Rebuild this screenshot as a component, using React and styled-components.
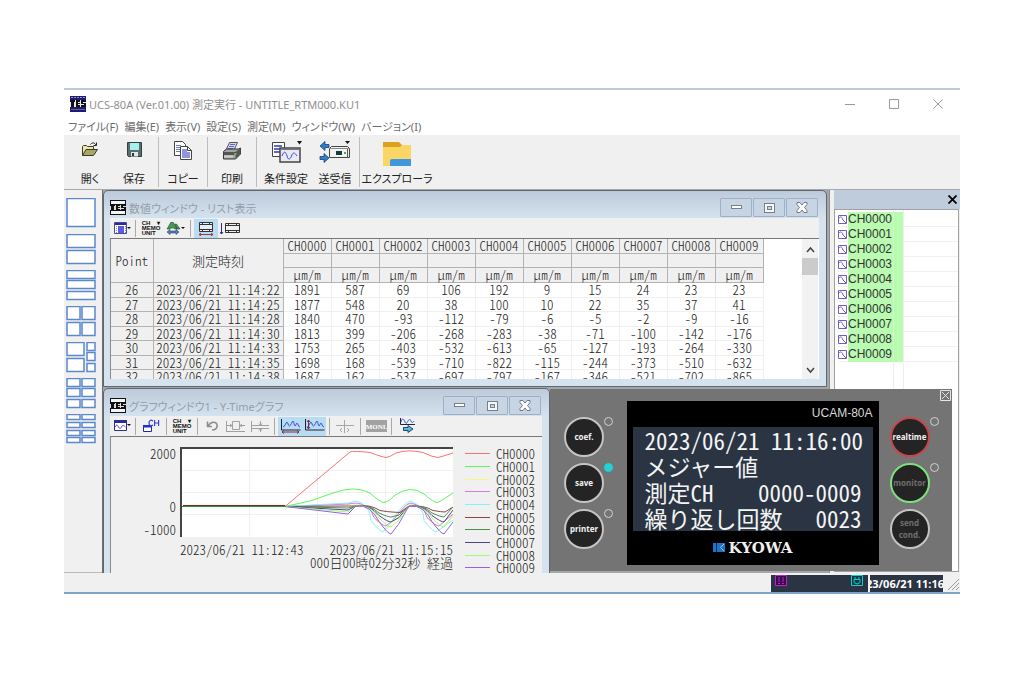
import React, { useState } from "react";
import styled, { createGlobalStyle } from "styled-components";

const UI_FONT = `"Noto Sans", "Noto Sans CJK JP", sans-serif`;
const GRID_FONT = `"Noto Sans CJK JP", monospace`;
const LIST_FONT = `"Liberation Sans", sans-serif`;

// ---------------------------------------------------------------- data

const menus = [
    "ファイル(F)",
    "編集(E)",
    "表示(V)",
    "設定(S)",
    "測定(M)",
    "ウィンドウ(W)",
    "バージョン(I)",
];

const channels = Array.from({ length: 10 }, (_, i) => `CH000${i}`);

const points = [
    [26, "22", [1891, 587, 69, 106, 192, 9, 15, 24, 23, 23]],
    [27, "25", [1877, 548, 20, 38, 100, 10, 22, 35, 37, 41]],
    [28, "28", [1840, 470, -93, -112, -79, -6, -5, -2, -9, -16]],
    [29, "30", [1813, 399, -206, -268, -283, -38, -71, -100, -142, -176]],
    [30, "33", [1753, 265, -403, -532, -613, -65, -127, -193, -264, -330]],
    [31, "35", [1698, 168, -539, -710, -822, -115, -244, -373, -510, -632]],
    [32, "38", [1687, 162, -537, -697, -797, -167, -346, -521, -702, -865]],
];

const colors = [
    "#f77474",
    "#5cf55c",
    "#f7f780",
    "#dd74e8",
    "#80f4fa",
    "#8f4444",
    "#4a8f4a",
    "#4c4484",
    "#a2fa74",
    "#9560f0",
];

// small channels: [ramp end, crest, first dip x, dip y]
const dips = [
    [57, 57, 207, 82],
    [57, 56, 206, 79],
    [56, 54, 203, 85],
    [59, 59, 212, 65],
    [61, 59, 211, 70],
    [63, 59, 211, 75],
    [65, 59, 211, 80],
    [67, 59, 211, 87],
];

// [x, y, w, h] panes of every layout preset
const grid = (cols, rows) => {
    const w = cols === 1 ? 29 : 14;
    const h = Math.floor(31 / rows) - 1;
    const out = [];
    for (let r = 0; r < rows; r++)
        for (let c = 0; c < cols; c++)
            out.push([c * 15, Math.round((r * 31) / rows), w, h]);
    return out;
};

const layouts = [
    ["1", [[0, 0, 29, 29]]],
    ["2", grid(1, 2)],
    ["3", grid(1, 3)],
    ["4", grid(2, 2)],
    [
        "5",
        [
            [0, 0, 18, 14],
            [0, 16, 18, 14],
            [20, 0, 9, 9],
            [20, 10, 9, 9],
            [20, 21, 9, 9],
        ],
    ],
    ["6", grid(2, 3)],
    ["8", grid(2, 4)],
];

// ---------------------------------------------------------------- styles

const GlobalStyle = createGlobalStyle`
    * {
        box-sizing: border-box;
    }
    body {
        margin: 0;
        background: #fff;
        font-family: ${UI_FONT};
        font-size: 11px;
        font-feature-settings: "palt";
    }
    button {
        padding: 0;
        border: 0;
        background: none;
        font: inherit;
        color: inherit;
        font-feature-settings: inherit;
    }
    svg {
        display: block;
    }
`;

const Page = styled.main`
    padding: 88px 64px;
`;

const AppWindow = styled.div`
    border-top: 2px solid #b9cbdc;
    border-bottom: 2px solid #7ba5cb;
    background: #f0f0f0;
`;

const TitleBar = styled.header`
    display: flex;
    align-items: center;
    height: 27px;
    padding-left: 6px;
    background: #fff;
`;

const AppTitle = styled.h1`
    flex: 1;
    margin: 0 0 0 3px;
    font-size: 11px;
    font-weight: 400;
    color: #8f8f8f;
`;

const CaptionButton = styled.button`
    display: grid;
    place-items: center;
    width: 44px;
    height: 26px;
    color: #9a9a9a;
`;

const MenuBar = styled.nav`
    display: flex;
    gap: 6px;
    height: 18px;
    padding-left: 4px;
    background: #fff;
    color: #6c6c6c;
    line-height: 19px;
    white-space: nowrap;
`;

const ToolBar = styled.div`
    display: flex;
    height: 55px;
    padding: 2px 0 2px 4px;
    border-bottom: 1px solid #a8a8a8;
    color: #222;
`;

const ToolButton = styled.button`
    display: flex;
    flex-direction: column;
    align-items: center;
    justify-content: space-between;
    width: ${(p) => p.$width || 44}px;
    padding-top: 4px;
    line-height: 17px;
    white-space: nowrap;
`;

const ToolDivider = styled.span`
    width: 1px;
    margin: 0 2px;
    background: #bdbdbd;
`;

const Workspace = styled.div`
    position: relative;
    display: flex;
    height: 383px;
`;

const LayoutBar = styled.aside`
    display: flex;
    flex-direction: column;
    gap: 5px;
    width: 38px;
    padding: 8px 0 0 2px;
    border-bottom: 1px solid #b8b8b8;
`;

const Desktop = styled.div`
    display: flex;
    flex: 1;
    flex-direction: column;
    gap: 1px;
    min-width: 0;
    padding: 0 2px 0 0;
    border-left: 1px solid #6d6d6d;
    background: #a3a7aa;
    overflow: hidden;
`;

const SubWindow = styled.section`
    display: flex;
    flex-direction: column;
    flex-shrink: 0;
    width: ${(p) => p.$width || "100%"};
    height: 197px;
    padding: 0 7px 7px 6px;
    border: 1px solid #5f6770;
    border-radius: 5px 5px 0 0;
    background: linear-gradient(#bccadb, #d6e3ef 28px, #d6e3ef);
`;

const SubTitleBar = styled.header`
    display: flex;
    align-items: center;
    gap: 1px;
    flex-shrink: 0;
    height: 27px;
    padding: 6px 1px 0 0;
`;

const SubTitle = styled.h2`
    flex: 1;
    margin: 0 0 0 2px;
    font-size: 11px;
    font-weight: 400;
    color: #949ea8;
`;

const SubCaptionButton = styled.button`
    display: grid;
    place-items: center;
    width: 32px;
    height: 19px;
    border: 1px solid #9fb0c4;
    border-radius: 1px;
    background: #c6d4e4;
`;

const SubToolBar = styled.div`
    display: flex;
    align-items: center;
    flex-shrink: 0;
    height: 21px;
    padding-left: 2px;
    background: #f0f0f0;
    border-bottom: 1px solid #777;
`;

const IconButton = styled.button`
    display: grid;
    place-items: center;
    width: ${(p) => p.$width || 24}px;
    height: 19px;
    background: ${(p) => (p.$active ? "#b9dcf5" : "none")};
`;

const MemoButton = styled(IconButton)`
    font: 700 6px/5px "Liberation Sans", sans-serif;
    color: #111;
    text-align: left;
    white-space: pre;
`;

const IconDivider = styled.span`
    width: 1px;
    height: 17px;
    margin: 0 3px;
    background: #a9a9a9;
`;

const ListBody = styled.div`
    display: flex;
    flex: 1;
    min-height: 0;
    background: #fff;
`;

const TableView = styled.div`
    flex: 1;
    overflow: hidden;
    border-left: 1px solid #8a8a8a;
`;

const DataTable = styled.table`
    table-layout: fixed;
    width: 652px;
    border-collapse: collapse;
    font: 300 13px/14px ${GRID_FONT};
    font-feature-settings: "hwid";
    color: #222;
    text-align: center;
`;

const HeadCell = styled.th`
    height: ${(p) => (p.$tall ? 43 : 14)}px;
    padding: 0;
    border: 1px solid #b3b3b3;
    border-top: 0;
    border-left: 0;
    background: #f0f0f0;
    font-weight: 300;
    line-height: 13px;
`;

const Row = styled.tr`
    height: 15px;

    &:nth-child(even) {
        height: 14px;
    }
`;

const IndexCell = styled.th`
    padding: 0;
    border: 1px solid #b3b3b3;
    border-left: 0;
    background: #f0f0f0;
    font-weight: 300;
    line-height: 13px;
    white-space: nowrap;
`;

const ValueCell = styled.td`
    padding: 0;
    border: 1px solid #f0f0f0;
    line-height: 13px;
`;

const ScrollBar = styled.div`
    display: flex;
    flex-direction: column;
    align-items: center;
    gap: 4px;
    width: 16px;
    margin-right: 1px;
    padding: 7px 0 5px;
    background: #f2f2f2;
`;

const ScrollThumb = styled.span`
    width: 16px;
    height: 17px;
    margin-bottom: auto;
    background: #cbcbcb;
`;

const GraphBody = styled.div`
    display: flex;
    flex: 1;
    gap: 12px;
    padding: 10px 0 0 26px;
    border-left: 1px solid #8a8a8a;
    background: #f0f0f0;
    font: 300 13px/13px ${GRID_FONT};
    font-feature-settings: "hwid";
    color: #222;
    white-space: nowrap;
`;

const Plot = styled.div`
    display: grid;
    grid-template-columns: 39px 273px;
    align-content: start;
    column-gap: 4px;
`;

const Scale = styled.div`
    display: grid;
    grid-template-rows: 53px 23px 13px;
    text-align: right;
`;

const TimeRange = styled.div`
    grid-column: 2;
    display: flex;
    justify-content: space-between;
    padding-top: 6px;
`;

const Elapsed = styled.div`
    grid-column: 1 / 3;
    text-align: right;
`;

const Legend = styled.ul`
    margin: 0;
    padding: 0;
    list-style: none;
`;

const LegendItem = styled.li`
    display: flex;
    align-items: flex-start;
    gap: 6px;
    height: 13px;

    &:nth-child(3n) {
        height: 12px;
    }

    &::before {
        content: "";
        width: 25px;
        height: 1px;
        margin-top: 6px;
        background: ${(p) => p.$color};
    }
`;

const Dock = styled.aside`
    display: flex;
    flex-direction: column;
    width: 131px;
    padding-left: 4px;
    border-left: 1px solid #8f8f8f;
`;

const DockHeader = styled.div`
    display: flex;
    justify-content: flex-end;
    align-items: center;
    height: 19px;
    padding-right: 3px;
    background: #bfccdb;
`;

const ChannelList = styled.ul`
    flex: 1;
    margin: 0 1px 1px 0;
    padding: 2px 0 0 3px;
    border: 1px solid #a0a0a0;
    background: linear-gradient(#eee, #eee) 58px 0 / 1px 100% no-repeat,
        linear-gradient(#eee, #eee) 68px 0 / 1px 100% no-repeat, #fff;
    list-style: none;
    font: 12px/15px ${LIST_FONT};
    color: #333;
`;

const Channel = styled.li`
    display: flex;
    align-items: center;
    height: 15px;
    border-bottom: 1px solid #f0f0f0;
`;

const ChannelName = styled.span`
    width: 55px;
    height: 15px;
    margin-left: 1px;
    background: linear-gradient(90deg, #b9fbb0 45px, #cdfcc6 45px, #cdfcc6 46px, #b9fbb0 46px);
`;

const Instrument = styled.section`
    position: absolute;
    right: 8px;
    bottom: 2px;
    display: flex;
    gap: 11px;
    width: 402px;
    height: 182px;
    padding: 12px 11px 0 14px;
    background: #747474;
`;

const InstrumentClose = styled.button`
    position: absolute;
    top: 1px;
    right: 1px;
`;

const KeyColumn = styled.div`
    display: flex;
    flex: 1;
    flex-direction: column;
    gap: 6px;
    padding-top: 16px;
`;

const KeySlot = styled.div`
    display: flex;
    align-items: flex-start;
    height: 40px;
`;

const Key = styled.button`
    flex-shrink: 0;
    width: 40px;
    height: 40px;
    border: 2px solid ${(p) => p.$ring || "#c4c4c4"};
    border-radius: 50%;
    background: #242424;
    font: 700 8px/12px ${UI_FONT};
    color: ${(p) => (p.$off ? "#6f6f6f" : "#f2f2f2")};
`;

const Lamp = styled.span`
    width: 9px;
    height: 9px;
    border: 1px solid ${(p) => (p.$on ? "#1fd3d6" : "#d2d2d2")};
    border-radius: 50%;
    background: ${(p) => (p.$on ? "#1fd3d6" : "none")};
`;

const Display = styled.div`
    flex-shrink: 0;
    width: 252px;
    height: 164px;
    padding: 5px 6px 0;
    background: #000;
    color: #fff;
`;

const Model = styled.div`
    color: #d8d8d8;
    font: 12px/14px ${LIST_FONT};
    text-align: right;
`;

const Lcd = styled.div`
    height: 104px;
    margin-top: 7px;
    padding: 0 0 0 12px;
    background: #2a3443;
    font: 23px/26px ${GRID_FONT};
    font-feature-settings: "hwid";
    color: #f4f4f4;
    white-space: pre;
`;

const LcdLine = styled.div`
    display: flex;
    justify-content: space-between;
    width: 217px;
    height: 26px;
`;

const Brand = styled.div`
    display: flex;
    align-items: center;
    justify-content: center;
    gap: 4px;
    height: 33px;
    font: 700 15px/16px "DejaVu Serif", serif;
    color: #f0f0f0;
`;

const StatusBar = styled.footer`
    display: flex;
    justify-content: flex-end;
    gap: 2px;
    height: 19px;
    padding-top: 2px;
`;

const StatusLights = styled.div`
    display: flex;
    justify-content: space-between;
    width: 97px;
    padding: 0 5px 0 4px;
    background: #2a3443;
`;

const Clock = styled.time`
    display: flex;
    justify-content: center;
    width: 73px;
    background: #2a3443;
    color: #fff;
    font: 700 11px/17px ${UI_FONT};
    white-space: nowrap;
    overflow: hidden;
`;

// ---------------------------------------------------------------- icons

const AppLogo = () => (
    <svg width="16" height="16" viewBox="0 0 16 16">
        <path fill="#1c1c78" d="M0 0h16v16H0z" />
        <path stroke="#99a" strokeDasharray="2 1" d="M1 1.500h14" />
        <path fill="#e8e8f0" d="M0 4h16v7H0z" />
        <path fill="#111" d="M0 4h5v2H4v5H1V6H0zM6 4h4v2H8v1h2v1H8v1h2v2H6zM11 4h5v2h-3v1h3v4h-5V9h3V8h-3z" />
        <path stroke="#667" d="M1 13.500h14" />
    </svg>
);

const WindowLogo = () => (
    <svg width="16" height="15" viewBox="0 0 16 15">
        <path fill="#111" d="M0 0h16v15H0z" />
        <path fill="#f4f4f4" d="M1 1h14v3H1zM1 11h14v3H1z" />
        <path fill="#ddd" d="M0 5h16v5H0z" />
        <path fill="#111" d="M0 5h5v1H4v4H1V6H0zM6 5h4v1H8v1h2v1H8v1h2v1H6zM11 5h5v1h-3v1h3v3h-5V9h3V8h-3z" />
    </svg>
);

const OpenIcon = () => (
    <svg width="18" height="18" viewBox="0 0 18 18">
        <path fill="#e9e6b0" stroke="#3d3c1c" d="M1.500 14.500V5.500l1-1h3l1 1h6v3" />
        <path fill="#a9a66a" stroke="#3d3c1c" d="M1.500 14.500 5 8.500h11.500l-4 6z" />
        <path fill="none" stroke="#222" d="M9.500 3.500c2-2.500 4-2 5.500.500M15.500 1.500v3h-3" />
    </svg>
);

const SaveIcon = () => (
    <svg width="17" height="18" viewBox="0 0 17 18">
        <path fill="#55706f" stroke="#333f3f" d="M1.500 1.500h14v14h-13l-1-1z" />
        <path fill="#a8f0f0" d="M4 2h9v7H4z" />
        <path fill="#e6e6e6" d="M5 11h7v4.500H5z" />
        <path fill="#333" d="M6 12h2v3H6z" />
    </svg>
);

const CopyIcon = () => (
    <svg width="20" height="20" viewBox="0 0 20 20">
        <path fill="#fff" stroke="#444" d="M1.500.500h8l3 3v11h-11z" />
        <path stroke="#6f78c8" d="M3 4.500h5M3 6.500h7M3 8.500h7M3 10.500h7" />
        <path fill="#fff" stroke="#444" d="M7.500 5.500h7l4 4v9h-11z" />
        <path fill="#8d94e0" d="M9 8h5v3h3v6H9z" />
        <path fill="none" stroke="#444" d="M14.500 5.500v4h4" />
    </svg>
);

const PrintIcon = () => (
    <svg width="20" height="20" viewBox="0 0 20 20">
        <path fill="#d4d6f4" stroke="#555" d="M7.500 1.500h8L12 9H4z" />
        <path stroke="#5d66c4" d="M8 3.500h5M7 5.500h5M6 7.500h5" />
        <path fill="#a4a4a4" stroke="#333" d="m1.500 10.500 3-2.500h12l2-1v6l-5 5h-12z" />
        <path fill="#555" d="M1.500 11h12v3h-12zM13.500 11l5-4v6l-5 5z" />
        <path fill="#d0d0d0" d="M2 14.500h9v2H2z" />
        <path fill="#4fc04f" d="M12 12h2.500v2H12z" />
    </svg>
);

const ConditionIcon = () => (
    <svg width="31" height="23" viewBox="0 0 31 23">
        <path fill="#fff" stroke="#444" d="M1.500 1.500h12v14h-12z" />
        <path stroke="#6069c8" strokeWidth="2" d="M3 5h8M3 8h8M3 11h8" />
        <path fill="#e9e9f6" stroke="#444" strokeWidth="1.500" d="M9 7h20v14H9z" />
        <path stroke="#777" d="M9 8.500h20" />
        <path fill="none" stroke="#4048c8" d="M11 15c2-6 4-4 5 0s3 4 4.500 0 3-4 5.500 0" />
        <path fill="#111" d="M26 0h5l-2.500 3.500z" />
    </svg>
);

const TransferIcon = () => (
    <svg width="32" height="23" viewBox="0 0 32 23">
        <path fill="#2e7fd0" stroke="#1c3f78" strokeWidth=".8" d="m1 5 5-4.500v3h4v3H6v3zM10 17l-5 4.500v-3H1v-3h4v-3z" />
        <path fill="#f2f2f2" stroke="#444" d="m10.500 7.500 2-2h16l2 2v9h-20z" />
        <path stroke="#888" d="M10.500 7.500h20" />
        <path fill="#143c3c" d="M17 10h6v4h-6z" />
        <path fill="#3fb04f" d="M25 11h2v2h-2z" />
        <path stroke="#555" d="M28.500 8v8" />
        <path fill="#111" d="M26 0h5l-2.500 3z" />
    </svg>
);

const ExplorerIcon = () => (
    <svg width="28" height="25" viewBox="0 0 28 25">
        <path fill="#dda21c" d="M0 1h16l3 3-2 4H0z" />
        <path fill="#fbd665" d="M0 6h17l2-2h9v21H0z" />
        <path fill="#3f97dc" d="M7 25v-5q0-2 2-2h19v7z" />
    </svg>
);

const ListViewIcon = () => (
    <svg width="17" height="12" viewBox="0 0 17 12">
        <path fill="#fff" stroke="#4a4a9a" d="M.5.500h12v11H.5z" />
        <path fill="#2b2ba8" d="M1 1h11v2H1z" />
        <path fill="#5c5ce0" d="M4 4h6v7H4z" />
        <path stroke="#8a8ad0" strokeDasharray="1 1" d="M2.500 4v7M11.500 4v7" />
        <path fill="#111" d="M13 5h4l-2 2z" />
    </svg>
);

const FontIcon = () => (
    <svg width="19" height="13" viewBox="0 0 19 13">
        <path fill="#3fa050" stroke="#223" strokeWidth=".5" d="M5 0h2l4 7H8.500L8 6H5L4 7H1zM9 2h1.500L14 7h-3z" />
        <path fill="#4a85d8" stroke="#223" strokeWidth=".5" d="m1 10 3-2.500V9h6V7.500l3 2.500-3 2.500V11H4v1.500z" />
        <path fill="#111" d="M15 5h4l-2 2z" />
    </svg>
);

const RowFitIcon = () => (
    <svg width="16" height="15" viewBox="0 0 16 15">
        <path fill="#e6eef4" stroke="#333" d="M1.500 1.500h13v9h-13z" />
        <path stroke="#333" d="M1 3.500h14M1 8.500h14M4.500 1v3M11.500 1v3M4.500 8v3M11.500 8v3" />
        <path fill="none" stroke="#a33" d="M1 13.500h14M3 12l-2 1.500L3 15M13 12l2 1.500-2 1.500" />
    </svg>
);

const ColumnFitIcon = () => (
    <svg width="20" height="13" viewBox="0 0 20 13">
        <path stroke="#2a2a8a" fill="none" d="M1.500 1v11M0 10l1.500 2L3 10" />
        <path fill="#f0f0f0" stroke="#333" d="M5.500 1.500h14v9h-14z" />
        <path stroke="#333" d="M5 3.500h14M5 8.500h14M8.500 1v3M16.500 1v3M8.500 8v3M16.500 8v3" />
    </svg>
);

const GraphViewIcon = () => (
    <svg width="17" height="12" viewBox="0 0 17 12">
        <path fill="#fff" stroke="#2c2c90" d="M.5.500h12v10H.5z" />
        <path fill="#2b2ba0" d="M0 0h13v3H0z" />
        <path fill="none" stroke="#3f3fd0" d="M1 7c1.500-3 2.500-2 3.500 0s2 2 3 0 2-2 4 0" />
        <path fill="#111" d="M13 4h4l-2 2z" />
    </svg>
);

const ChannelIcon = () => (
    <svg width="18" height="14" viewBox="0 0 18 14">
        <path fill="#fff" stroke="#222c9c" d="M1.500 6.500h8v6h-8z" />
        <path fill="#2230c8" d="M1 6h9v2.500H1z" />
        <path fill="none" stroke="#3540e0" strokeWidth="1.200" d="M11 2.200C9 .2 7 1.500 7 4s2 3.800 4 1.800M12.600 1v6M16.600 1v6M12.600 4h4" />
    </svg>
);

const UndoIcon = () => (
    <svg width="13" height="12" viewBox="0 0 13 12">
        <path fill="none" stroke="#8d8d8d" strokeWidth="1.600" d="M2 6c3-5 8-4.500 9-1.500C12 8 9 10 6 10M1.500 1.500V6.500H6" />
    </svg>
);

const SpreadIcon = ({ vertical }) => (
    <svg width="19" height="13" viewBox="0 0 19 13">
        {vertical ? (
            <path fill="none" stroke="#a0a0a0" d="M1.500 1v11M2 5.500h17M2 8.500h17M10.500 1v4M10.500 9v3M9 3.500l1.500 2 1.500-2M9 10.500l1.500-2 1.500 2" />
        ) : (
            <path fill="none" stroke="#a0a0a0" d="M.5 1v11M6.500 1.500h7v8h-7zM1 5.500h5M14 5.500h5M4 4l2 1.500L4 7M16 4l-2 1.500L16 7M1 11.500h18" />
        )}
    </svg>
);

const WaveIcon = ({ tall }) => (
    <svg width="21" height="16" viewBox="0 0 21 16">
        <path fill="none" stroke="#3c4fd0" d="M3 9c2 0 3-5 4-5s1 4 2.500 4S12 3 13 3s1 5 2 5 1-3 2-3 1 4 3 4" />
        <path stroke="#223" d="M1.500 1v11h19" fill="none" />
        {tall ? (
            <path fill="none" stroke="#8a2a3a" d="M4.500 2v9M3 4l1.500-2L6 4M3 9l1.500 2L6 9" />
        ) : (
            <path fill="none" stroke="#8a2a3a" d="M2 14h17M4 12.500 2 14l2 1.500M17 12.500l2 1.500-2 1.500" />
        )}
    </svg>
);

const CursorIcon = () => (
    <svg width="18" height="13" viewBox="0 0 18 13">
        <path fill="none" stroke="#a5a5a5" d="M0 5.500h18M8.500 0v13M6 8 4 10l2 2M11 8l2 2-2 2" />
    </svg>
);

const MonitorIcon = () => (
    <svg width="21" height="12" viewBox="0 0 21 12">
        <path fill="#a2a2a2" d="M0 0h21v12H0z" />
        <text x="10.500" y="9" textAnchor="middle" fontFamily="Liberation Serif, serif" fontWeight="700" fontSize="7" fill="#fff">
            MONI.
        </text>
    </svg>
);

const ForwardIcon = () => (
    <svg width="17" height="16" viewBox="0 0 17 16">
        <path fill="none" stroke="#223" d="M1.500 0v6.500H16" />
        <path fill="none" stroke="#3c4fd0" d="M2 4c1-4 2.500-4 4 0 1 2.500 2 1 3-1s2.500-2 3 0 2 2 3 0" />
        <path fill="#58b8e0" stroke="#1d4960" d="M4.500 9.500H9v-2l5 3.500-5 3.500v-2H4.500z" />
    </svg>
);

const CloseGlyph = ({ size = 10, width = 1 }) => (
    <svg width={size} height={size} viewBox="0 0 10 10">
        <path stroke="currentColor" strokeWidth={width} d="M.5.500l9 9M9.500.500l-9 9" />
    </svg>
);

const Caption = () => (
    <>
        <SubCaptionButton aria-label="最小化">
            <svg width="11" height="5">
                <rect x=".5" y=".5" width="10" height="3" fill="#fff" stroke="#76808c" />
            </svg>
        </SubCaptionButton>
        <SubCaptionButton aria-label="最大化">
            <svg width="11" height="10">
                <rect x=".5" y=".5" width="10" height="9" fill="#f4f6f8" stroke="#76808c" />
                <rect x="3.500" y="3.500" width="4" height="3" fill="#c6d4e4" stroke="#76808c" />
            </svg>
        </SubCaptionButton>
        <SubCaptionButton aria-label="閉じる">
            <svg width="12" height="11" viewBox="0 0 12 11">
                <path fill="#fff" stroke="#707a86" d="M1 .500h3l2 2.500 2-2.500h3v2L8.500 5.500 11 8.500v2H8L6 8l-2 2.500H1v-2l2.500-3L1 2.500z" />
            </svg>
        </SubCaptionButton>
    </>
);

const LayoutIcon = ({ panes }) => (
    <svg width="31" height="31" viewBox="0 0 31 31">
        {panes.map(([x, y, w, h], i) => (
            <rect key={i} x={x + 1} y={y + 0.5} width={w - 1} height={h - 1} fill="#fff" stroke="#5b87cc" strokeWidth="1.500" />
        ))}
    </svg>
);

// ---------------------------------------------------------------- chart

const dipPath = ([ramp, crest, x, y]) =>
    `M105 59.500L168 ${ramp}L176 ${crest}Q190 57 ${x - 12} ${(y + 62) / 2}Q${x - 3} ${y} ${x} ${y}` +
    `L${x + 8} ${(y + 66) / 2}Q${x + 18} 58 230 ${crest}Q244 58 ${x + 41} ${(y + 62) / 2}` +
    `Q${x + 50} ${y} ${x + 53} ${y}L273 ${Math.max(60, y - 12)}`;

const Chart = () => (
    <svg width="273" height="90" viewBox="0 0 273 90">
        <path fill="#fff" d="M0 0h273v90H0z" />
        <path stroke="#f0f0f0" d="M69.500 1v89M137.500 1v89M205.500 1v89M1 23.500h273M1 45.500h273M1 67.500h273" />
        <g fill="none" strokeWidth="1">
            {dips.map((d, i) => (
                <path key={i} stroke={colors[i + 2]} d={dipPath(d)} />
            ))}
            <path
                stroke={colors[1]}
                d="M105 59.500L130 54L153 46Q175 38 190 46Q200 55 204 55.500Q209 55 214 49Q230 37 244 47Q254 56 258 55.500Q264 52 273 46"
            />
            <path
                stroke={colors[0]}
                d="M105 59.500L170 5Q173 3.500 190 5.500Q202 10 206 10.500Q210 10 216 6Q228 2 243 5.500Q252 10 258 10.500Q264 9 273 6"
            />
            <path stroke="#8a2020" d="M3 58.500h102" />
            <path stroke="#2a9a3a" d="M0 59.500h106" />
            <path stroke="#444" strokeWidth="2" d="M1 90V1h273" />
        </g>
    </svg>
);

// ---------------------------------------------------------------- parts

const ListWindow = () => (
    <SubWindow>
        <SubTitleBar>
            <WindowLogo />
            <SubTitle>数値ウィンドウ - リスト表示</SubTitle>
            <Caption />
        </SubTitleBar>
        <SubToolBar>
            <IconButton $width={20} aria-label="表示"><ListViewIcon /></IconButton>
            <IconDivider />
            <MemoButton $width={24}>{"CH    ▾\nMEMO\nUNIT"}</MemoButton>
            <IconButton aria-label="文字"><FontIcon /></IconButton>
            <IconDivider />
            <IconButton $active aria-label="列"><RowFitIcon /></IconButton>
            <IconButton aria-label="行"><ColumnFitIcon /></IconButton>
        </SubToolBar>
        <ListBody>
            <TableView>
                <DataTable>
                    <colgroup>
                        <col width="42" />
                        <col width="130" />
                        {channels.map((ch) => (
                            <col key={ch} width="48" />
                        ))}
                    </colgroup>
                    <thead>
                        <tr>
                            <HeadCell $tall rowSpan={3}>Point</HeadCell>
                            <HeadCell $tall rowSpan={3}>測定時刻</HeadCell>
                            {channels.map((ch) => (
                                <HeadCell key={ch}>{ch}</HeadCell>
                            ))}
                        </tr>
                        <tr>
                            {channels.map((ch) => (
                                <HeadCell key={ch} />
                            ))}
                        </tr>
                        <tr>
                            {channels.map((ch) => (
                                <HeadCell key={ch}>μm/m</HeadCell>
                            ))}
                        </tr>
                    </thead>
                    <tbody>
                        {points.map(([no, sec, values]) => (
                            <Row key={no}>
                                <IndexCell>{no}</IndexCell>
                                <IndexCell>{`2023/06/21 11:14:${sec}`}</IndexCell>
                                {values.map((v, i) => (
                                    <ValueCell key={i}>{v}</ValueCell>
                                ))}
                            </Row>
                        ))}
                    </tbody>
                </DataTable>
            </TableView>
            <ScrollBar>
                <svg width="9" height="8" viewBox="0 0 9 8">
                    <path fill="none" stroke="#444" strokeWidth="1.500" d="m1 6 3.500-4L8 6" />
                </svg>
                <ScrollThumb />
                <svg width="9" height="8" viewBox="0 0 9 8">
                    <path fill="none" stroke="#444" strokeWidth="1.500" d="m1 2 3.500 4L8 2" />
                </svg>
            </ScrollBar>
        </ListBody>
    </SubWindow>
);

const GraphWindow = () => (
    <SubWindow $width="447px">
        <SubTitleBar>
            <WindowLogo />
            <SubTitle>グラフウィンドウ1 - Y-Timeグラフ</SubTitle>
            <Caption />
        </SubTitleBar>
        <SubToolBar>
            <IconButton $width={20} aria-label="表示"><GraphViewIcon /></IconButton>
            <IconDivider />
            <IconButton aria-label="チャネル"><ChannelIcon /></IconButton>
            <IconDivider />
            <MemoButton $width={24}>{"CH    ▾\nMEMO\nUNIT"}</MemoButton>
            <IconDivider />
            <IconButton $width={22} aria-label="元に戻す"><UndoIcon /></IconButton>
            <IconButton aria-label="横軸"><SpreadIcon /></IconButton>
            <IconButton aria-label="縦軸"><SpreadIcon vertical /></IconButton>
            <IconDivider />
            <IconButton $active aria-label="横軸自動"><WaveIcon /></IconButton>
            <IconButton $active aria-label="縦軸自動"><WaveIcon tall /></IconButton>
            <IconDivider />
            <IconButton aria-label="カーソル"><CursorIcon /></IconButton>
            <IconDivider />
            <IconButton aria-label="モニタ"><MonitorIcon /></IconButton>
            <IconDivider />
            <IconButton aria-label="送る"><ForwardIcon /></IconButton>
        </SubToolBar>
        <GraphBody>
            <Plot>
                <Scale>
                    <span>2000</span>
                    <span>0</span>
                    <span>-1000</span>
                </Scale>
                <Chart />
                <TimeRange>
                    <span>2023/06/21 11:12:43</span>
                    <span>2023/06/21 11:15:15</span>
                </TimeRange>
                <Elapsed>000日00時02分32秒 経過</Elapsed>
            </Plot>
            <Legend>
                {channels.map((ch, i) => (
                    <LegendItem key={ch} $color={colors[i]}>{ch}</LegendItem>
                ))}
            </Legend>
        </GraphBody>
    </SubWindow>
);

const InstrumentPanel = ({ onClose }) => (
    <Instrument>
        <KeyColumn>
            <KeySlot><Key>coef.</Key><Lamp /></KeySlot>
            <KeySlot><Key>save</Key><Lamp $on /></KeySlot>
            <KeySlot><Key>printer</Key><Lamp /></KeySlot>
        </KeyColumn>
        <Display>
            <Model>UCAM-80A</Model>
            <Lcd>
                <LcdLine>2023/06/21 11:16:00</LcdLine>
                <LcdLine>メジャー値</LcdLine>
                <LcdLine><span>測定CH</span><span>0000-0009</span></LcdLine>
                <LcdLine><span>繰り返し回数</span><span>0023</span></LcdLine>
            </Lcd>
            <Brand>
                <svg width="12" height="9" viewBox="0 0 12 9">
                    <path fill="#1d74c4" d="M0 0h12v9H0z" />
                    <path fill="none" stroke="#0a2a50" d="M3.500 0v9" />
                    <path fill="none" stroke="#8cc4f0" d="M11 1 7.500 4.500 11 8" />
                </svg>
                KYOWA
            </Brand>
        </Display>
        <KeyColumn>
            <KeySlot><Key $ring="#c8464c">realtime</Key><Lamp /></KeySlot>
            <KeySlot><Key $ring="#7fe07f" $off>monitor</Key><Lamp /></KeySlot>
            <KeySlot><Key $off>send<br />cond.</Key></KeySlot>
        </KeyColumn>
        <InstrumentClose aria-label="閉じる" onClick={onClose}>
            <svg width="11" height="11" viewBox="0 0 11 11">
                <path fill="none" stroke="#e6e6e6" d="M.5.500h10v10H.5zM2 2l7 7M9 2 2 9" />
            </svg>
        </InstrumentClose>
    </Instrument>
);

export default function App() {
    // the meter panel floats over the desktop until it is closed
    const [panelOpen, setPanelOpen] = useState(true);

    return (
        <>
            <GlobalStyle />
            <Page>
                <AppWindow>
                    <TitleBar>
                        <AppLogo />
                        <AppTitle>UCS-80A (Ver.01.00) 測定実行 - UNTITLE_RTM000.KU1</AppTitle>
                        <CaptionButton aria-label="最小化">
                            <svg width="10" height="10"><path stroke="currentColor" d="M0 5.500h10" /></svg>
                        </CaptionButton>
                        <CaptionButton aria-label="最大化">
                            <svg width="10" height="10"><path fill="none" stroke="currentColor" d="M.5.500h9v9h-9z" /></svg>
                        </CaptionButton>
                        <CaptionButton aria-label="閉じる"><CloseGlyph /></CaptionButton>
                    </TitleBar>
                    <MenuBar>
                        {menus.map((m) => (
                            <button key={m}>{m}</button>
                        ))}
                    </MenuBar>
                    <ToolBar>
                        <ToolButton><OpenIcon />開く</ToolButton>
                        <ToolButton><SaveIcon />保存</ToolButton>
                        <ToolDivider />
                        <ToolButton><CopyIcon />コピー</ToolButton>
                        <ToolDivider />
                        <ToolButton><PrintIcon />印刷</ToolButton>
                        <ToolDivider />
                        <ToolButton $width={54}><ConditionIcon />条件設定</ToolButton>
                        <ToolButton><TransferIcon />送受信</ToolButton>
                        <ToolDivider />
                        <ToolButton $width={70}><ExplorerIcon />エクスプローラ</ToolButton>
                    </ToolBar>
                    <Workspace>
                        <LayoutBar>
                            {layouts.map(([name, panes]) => (
                                <button key={name} aria-label={`${name}分割`}>
                                    <LayoutIcon panes={panes} />
                                </button>
                            ))}
                        </LayoutBar>
                        <Desktop>
                            <ListWindow />
                            <GraphWindow />
                        </Desktop>
                        <Dock>
                            <DockHeader>
                                <button aria-label="閉じる"><CloseGlyph size={9} width={2} /></button>
                            </DockHeader>
                            <ChannelList>
                                {channels.map((ch) => (
                                    <Channel key={ch}>
                                        <svg width="9" height="9" viewBox="0 0 9 9">
                                            <path fill="#fff" stroke="#6a5fc8" d="M.5.500h8v8h-8z" />
                                            <path fill="none" stroke="#6a5fc8" d="M1 3c2-2 3-1 4 2l3 3" />
                                        </svg>
                                        <ChannelName>{ch}</ChannelName>
                                    </Channel>
                                ))}
                            </ChannelList>
                        </Dock>
                        {panelOpen && <InstrumentPanel onClose={() => setPanelOpen(false)} />}
                    </Workspace>
                    <StatusBar>
                        <StatusLights>
                            <svg width="12" height="12" viewBox="0 0 12 12">
                                <path fill="#3a0a4a" stroke="#c020d0" d="M.5.500h11v10H.5zM4 2v5M8 2v5M3 8.500h2M7 8.500h2" />
                            </svg>
                            <svg width="12" height="12" viewBox="0 0 12 12">
                                <path fill="#0a3a44" stroke="#1fc8cc" d="M.5.500h11v10H.5zM3 4.500h6v3q-3 3-6 0zM4 4V2M8 4V2" />
                            </svg>
                        </StatusLights>
                        <Clock>2023/06/21 11:16:00</Clock>
                        <svg width="15" height="17" viewBox="0 0 15 17">
                            <path stroke="#9a9a9a" d="M3 15 14 4M7 15l7-7M11 15l3-3" />
                        </svg>
                    </StatusBar>
                </AppWindow>
            </Page>
        </>
    );
}
